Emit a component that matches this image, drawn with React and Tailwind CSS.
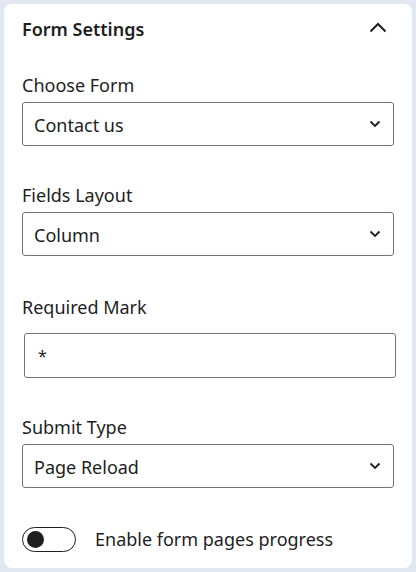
import React from "react";

const font = { fontFamily: '"Noto Sans", "Open Sans", sans-serif' };

function ChevronDown() {
  return (
    <svg width="12" height="8" viewBox="0 0 12 8" fill="none" className="shrink-0">
      <path d="M1.5 1.5 L6 6 L10.5 1.5" stroke="#1e1e1e" strokeWidth="1.8" />
    </svg>
  );
}

function Select({ value }) {
  return (
    <div className="flex h-[44px] items-center justify-between rounded-[3px] border border-[#757575] bg-white pl-[11px] pr-[12px] text-[18px] text-[#1e1e1e]">
      <span className="translate-y-[1px]">{value}</span>
      <ChevronDown />
    </div>
  );
}

function Label({ children }) {
  return <div className="h-[24px] text-[18px] leading-[24px] text-[#1e1e1e]">{children}</div>;
}

export default function App() {
  return (
    <div className="h-[572px] w-[416px] bg-[#e2e8f0] p-[4px]" style={font}>
      <div className="flex h-full flex-col rounded-[8px] bg-white px-[18px]">
        <div className="flex h-[50px] shrink-0 items-center justify-between">
          <div className="text-[18px] font-semibold text-[#1e1e1e]">Form Settings</div>
          <svg width="18" height="11" viewBox="0 0 18 11" fill="none" className="mr-[7px] -translate-y-[2px]">
            <path d="M1.5 9.5 L9 2 L16.5 9.5" stroke="#1e1e1e" strokeWidth="2" />
          </svg>
        </div>

        <div className="mt-[19px]">
          <Label>Choose Form</Label>
          <div className="mt-[5px]">
            <Select value="Contact us" />
          </div>
        </div>

        <div className="mt-[37px]">
          <Label>Fields Layout</Label>
          <div className="mt-[5px]">
            <Select value="Column" />
          </div>
        </div>

        <div className="mt-[39px]">
          <Label>Required Mark</Label>
          <div className="ml-[2px] mr-[-2px] mt-[14px] flex h-[45px] items-center rounded-[3px] border border-[#757575] bg-white pl-[13px] text-[16px] text-[#1e1e1e]">
            *
          </div>
        </div>

        <div className="mt-[37px]">
          <Label>Submit Type</Label>
          <div className="mt-[5px]">
            <Select value="Page Reload" />
          </div>
        </div>

        <div className="mt-[38px] flex items-center">
          <div className="flex h-[25px] w-[54px] items-center rounded-full border border-[#1e1e1e] px-[4px]">
            <div className="h-[17px] w-[17px] rounded-full bg-[#1e1e1e]" />
          </div>
          <div className="ml-[19px] text-[18px] text-[#1e1e1e]">Enable form pages progress</div>
        </div>
      </div>
    </div>
  );
}
